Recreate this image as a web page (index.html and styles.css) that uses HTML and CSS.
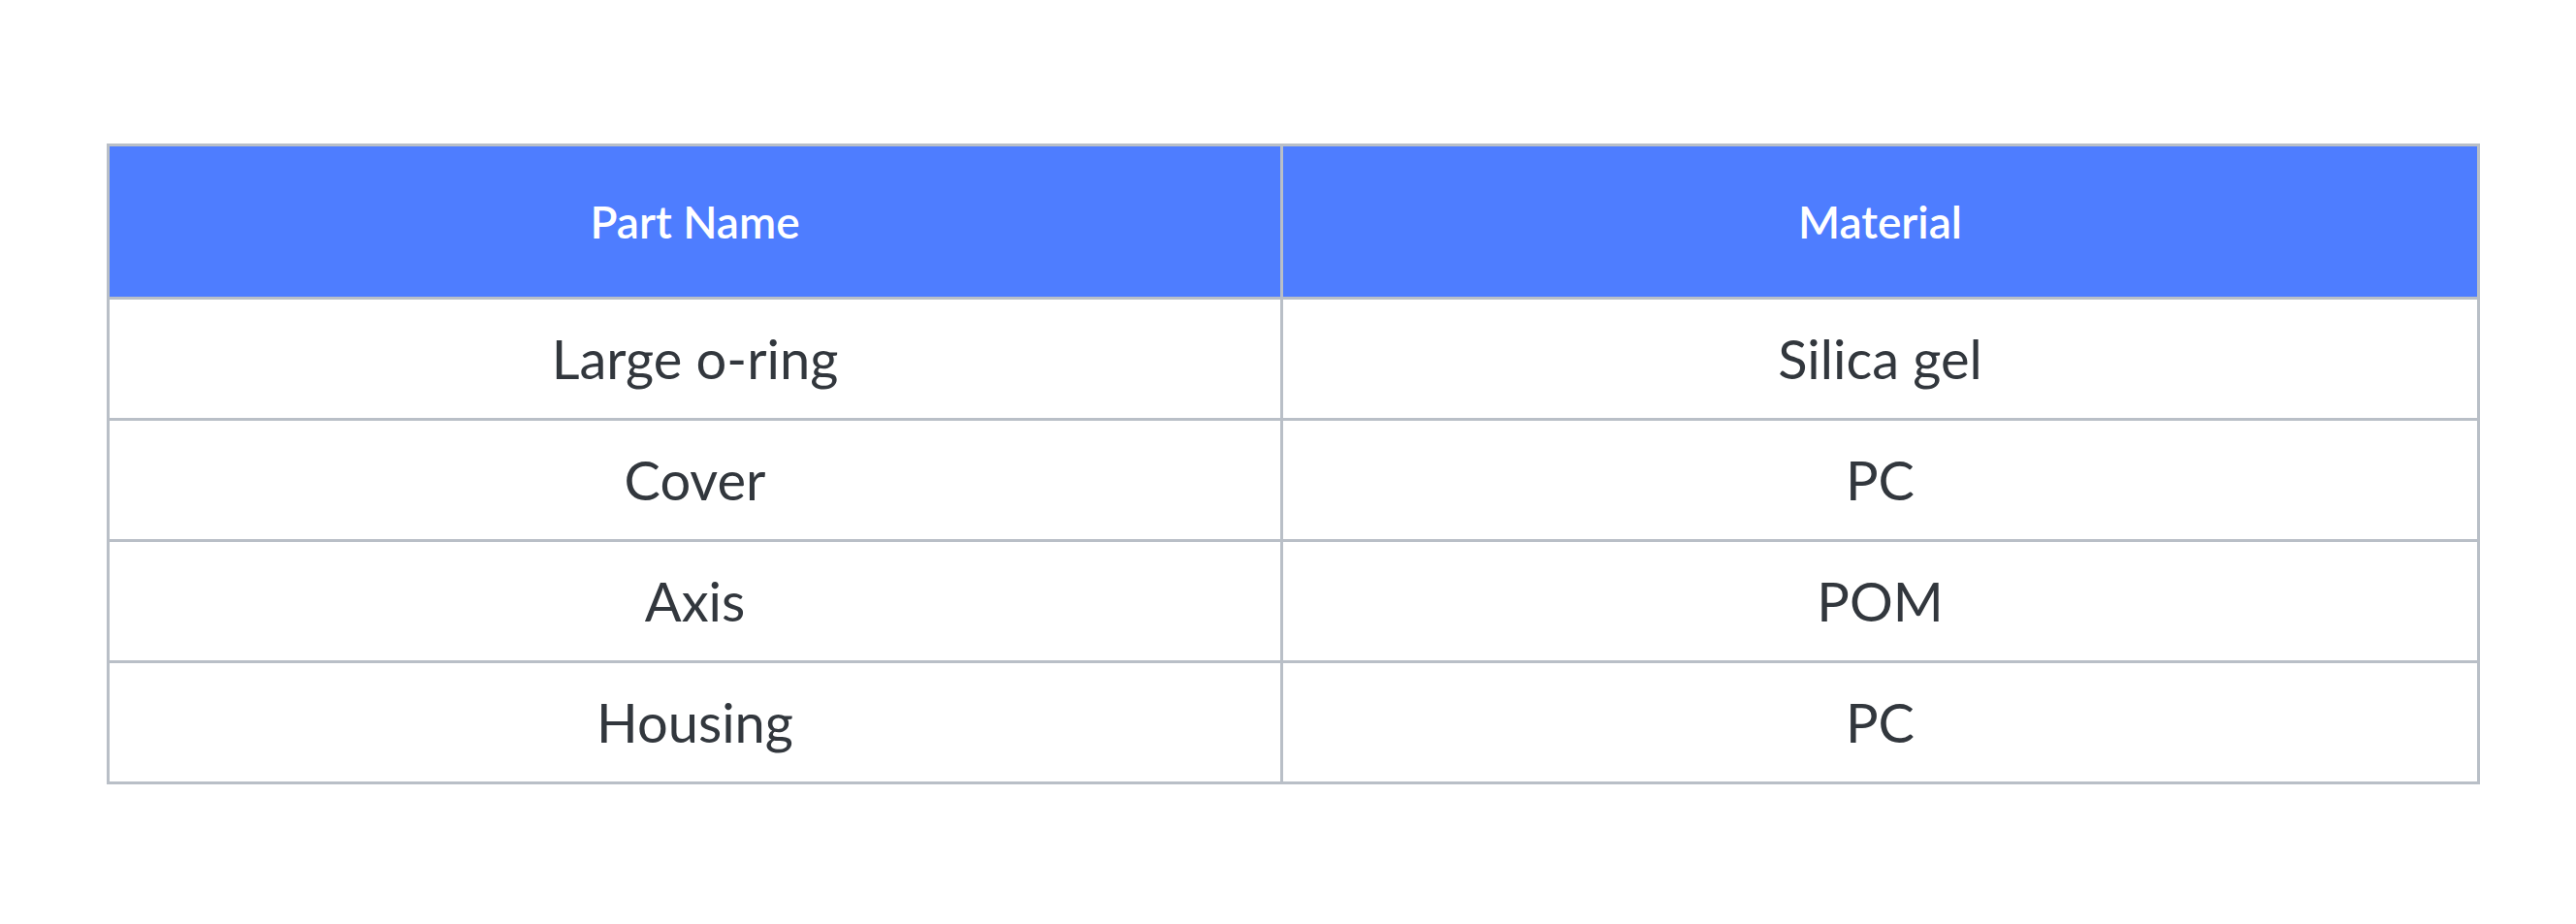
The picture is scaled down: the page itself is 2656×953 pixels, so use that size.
FILE: index.html
```html
<!DOCTYPE html>
<html lang="en">
<head>
    <meta charset="UTF-8">
    <title>Part materials</title>
    <link rel="stylesheet" href="styles.css">
</head>
<body>
    <div class="wrap">
        <table class="parts">
            <colgroup>
                <col class="col-name">
                <col>
            </colgroup>
            <thead>
                <tr>
                    <th>Part Name</th>
                    <th>Material</th>
                </tr>
            </thead>
            <tbody>
                <tr>
                    <td>Large o-ring</td>
                    <td>Silica gel</td>
                </tr>
                <tr>
                    <td>Cover</td>
                    <td>PC</td>
                </tr>
                <tr>
                    <td>Axis</td>
                    <td>POM</td>
                </tr>
                <tr>
                    <td>Housing</td>
                    <td>PC</td>
                </tr>
            </tbody>
        </table>
    </div>
</body>
</html>
```

FILE: styles.css
```css
body {
    margin: 0;
    background-color: #fff;
    font-family: Lato, "Open Sans", sans-serif;
}
.wrap {
    padding: 148px 0 0 110px;
}
.parts {
    width: 2447px;
    border-collapse: separate;
    border-spacing: 0;
    border-top: 3px solid #b9bfc7;
    border-left: 3px solid #b9bfc7;
    table-layout: fixed;
}
.col-name {
    width: 1210px;
}
.parts th,
.parts td {
    padding: 0;
    text-align: center;
    border-right: 3px solid #b9bfc7;
    border-bottom: 3px solid #b9bfc7;
}
.parts th {
    background-color: #4e7dff;
    color: #fff;
    font-weight: 600;
    font-size: 46px;
    line-height: 155px;
}
.parts td {
    color: #32373d;
    font-weight: 400;
    font-size: 56px;
    line-height: 122px;
}
```
